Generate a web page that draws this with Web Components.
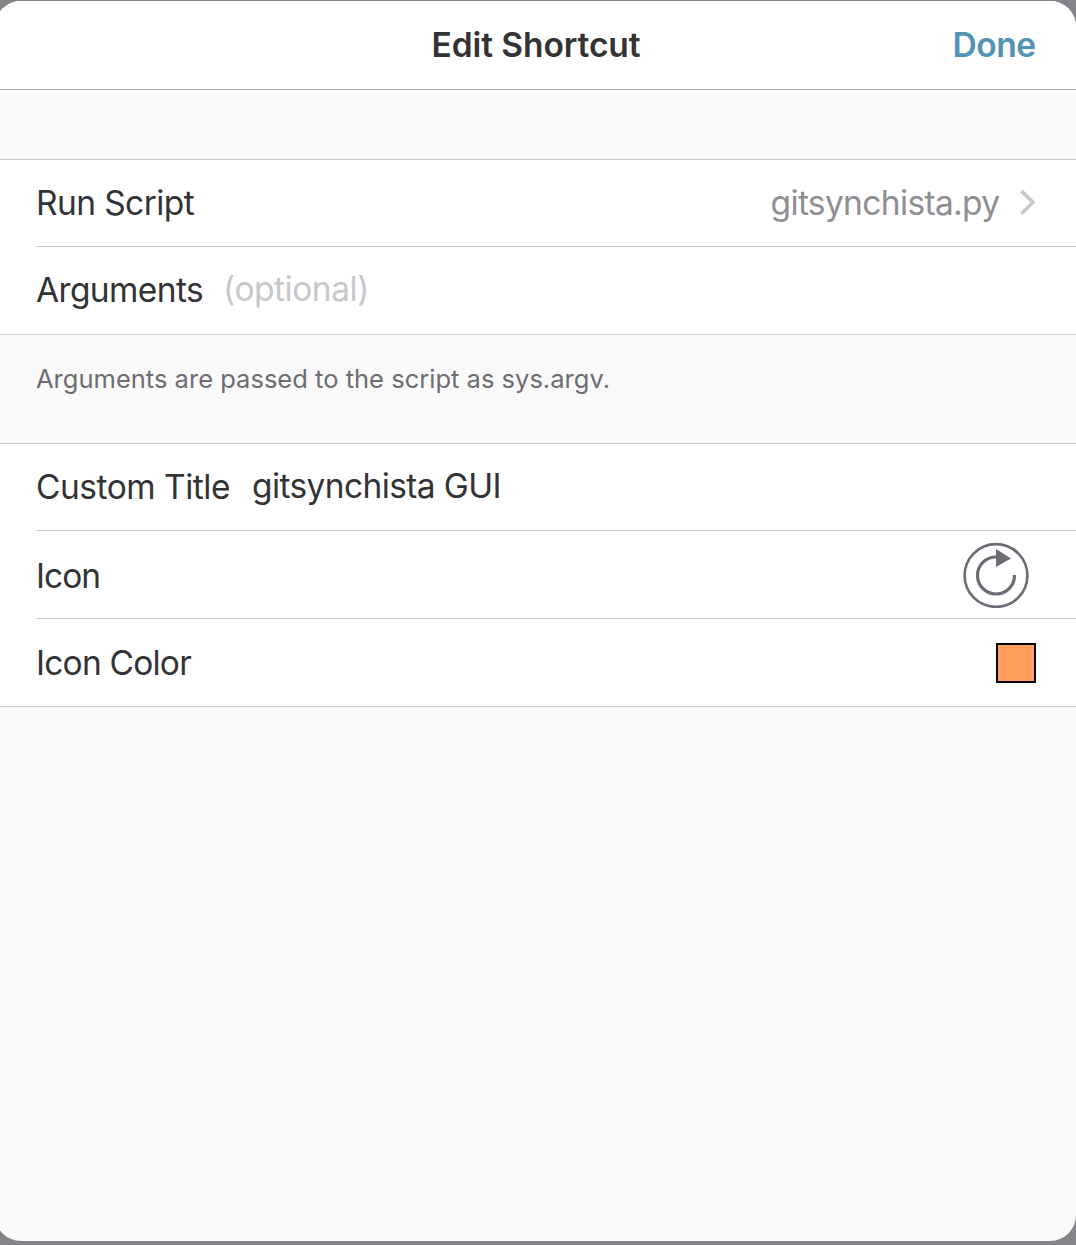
<!DOCTYPE html>
<html lang="en"><head><meta charset="utf-8"><title>Edit Shortcut</title>
<style>
body{margin:0;background:#858589;font-family:Inter,"Liberation Sans",sans-serif;color:#333335}
</style></head><body>
<edit-sheet>
<nav-bar slot="nav"><t-x size="33.5" width="209" weight="600">Edit Shortcut</t-x><t-x slot="action" size="33.5" width="83" weight="600" color="#5293b5">Done</t-x></nav-bar>
<row-group style="margin-top:69px">
<form-row h="86"><t-x size="33.5" width="158">Run Script</t-x><t-x slot="end" size="33.5" width="229" color="#8e8e93">gitsynchista.py</t-x><chevron-icon slot="end"></chevron-icon></form-row>
<form-row h="87"><t-x size="33.5" width="167" up="1">Arguments</t-x><t-x size="33.5" width="146" color="#c7c7cc" up="1.5" style="margin-left:-2px">(optional)</t-x></form-row>
</row-group>
<foot-note><t-x size="25.5" width="574" color="#6d6d72">Arguments are passed to the script as sys.argv.</t-x></foot-note>
<row-group>
<form-row h="86"><t-x size="33.5" width="194">Custom Title</t-x><t-x size="33.5" width="249" up="1">gitsynchista GUI</t-x></form-row>
<form-row h="87"><t-x size="33.5" width="64" up="-1">Icon</t-x><reload-icon slot="end"></reload-icon></form-row>
<form-row h="87"><t-x size="33.5" width="155">Icon Color</t-x><color-swatch slot="end"></color-swatch></form-row>
</row-group>
</edit-sheet>
<script>
const make=(name,html,setup)=>customElements.define(name,class extends HTMLElement{
 constructor(){super();this.attachShadow({mode:'open'}).innerHTML=html;}
 connectedCallback(){if(setup)setup(this,this.shadowRoot);}
});
// One line of text, letter-spaced to its nominal width.
make('t-x','<style>:host{display:block;white-space:nowrap;line-height:42px}span{display:inline-block}</style><span><slot></slot></span>',(e,r)=>{
 const a=n=>e.getAttribute(n);
 e.style.fontSize=a('size')+'px';e.style.fontWeight=a('weight')||400;if(a('color'))e.style.color=a('color');
 const up=+a('up');
 if(up>0)e.style.paddingBottom=2*up+'px';
 if(up<0)e.style.paddingTop=-2*up+'px';
 const s=r.querySelector('span'),w=+a('width');
 const n=e.textContent.length,d=(w-s.getBoundingClientRect().width)/n;
 e.style.letterSpacing=d+'px';
});
make('edit-sheet','<style>:host{display:block;height:1245px;box-sizing:border-box;padding:1px 0 4px;overflow:hidden}main{height:1240px;margin-left:-5px;background:#fafafa;border-radius:26px;overflow:hidden}.in{margin-left:5px;display:flex;flex-direction:column}.nav{background:#fff;padding-left:5px}</style><main><div class="nav"><slot name="nav"></slot></div><div class="in"><slot></slot></div></main>');
make('nav-bar','<style>:host{display:grid;grid-template-columns:1fr auto 1fr;align-items:center;box-sizing:border-box;height:89px;padding:0 40.5px 0 36.5px;background:#fff;border-bottom:1px solid #b2b2b2}.t{grid-column:2}.a{justify-self:end}</style><div class="t"><slot></slot></div><div class="a"><slot name="action"></slot></div>');
make('row-group','<style>:host{display:block;background:#fff;border-top:1px solid #cacacd;border-bottom:1px solid #cacacd}::slotted(form-row:not(:last-child)){border-bottom:1px solid #cacacd}</style><slot></slot>');
make('form-row','<style>:host{display:flex;justify-content:space-between;align-items:center;margin-left:36px;padding-right:40px}.s,.e{display:flex;align-items:center}.s{gap:22px}.e{gap:19.5px}</style><div class="s"><slot></slot></div><div class="e"><slot name="end"></slot></div>',e=>e.style.height=e.getAttribute('h')+'px');
make('foot-note','<style>:host{display:flex;height:108px;padding:23px 36px 0;box-sizing:border-box}</style><slot></slot>');
make('chevron-icon','<style>:host,svg{display:block}</style><svg width="17" height="28" viewBox="0 0 17 28" fill="none"><path d="M2.3 1.9 14 13.3 2.3 24.7" stroke="#c7c7cc" stroke-width="3.6"/></svg>');
make('reload-icon','<style>:host{display:block;margin-right:7px}svg{display:block}</style><svg width="66" height="66" viewBox="0 0 66 66"><circle cx="33" cy="33.5" r="31.4" fill="none" stroke="#6c6b76" stroke-width="2.6"/><path d="M33 15A18.5 18.5 0 1 0 51.5 33" fill="none" stroke="#6c6b76" stroke-width="3.2"/><path d="M33 7 48 16.5 33 25Z" fill="#6c6b76"/></svg>');
make('color-swatch','<style>:host{display:block;box-sizing:border-box;width:40px;height:40px;background:#ff9d5c;border:2px solid #000}</style>');
</script></body></html>
